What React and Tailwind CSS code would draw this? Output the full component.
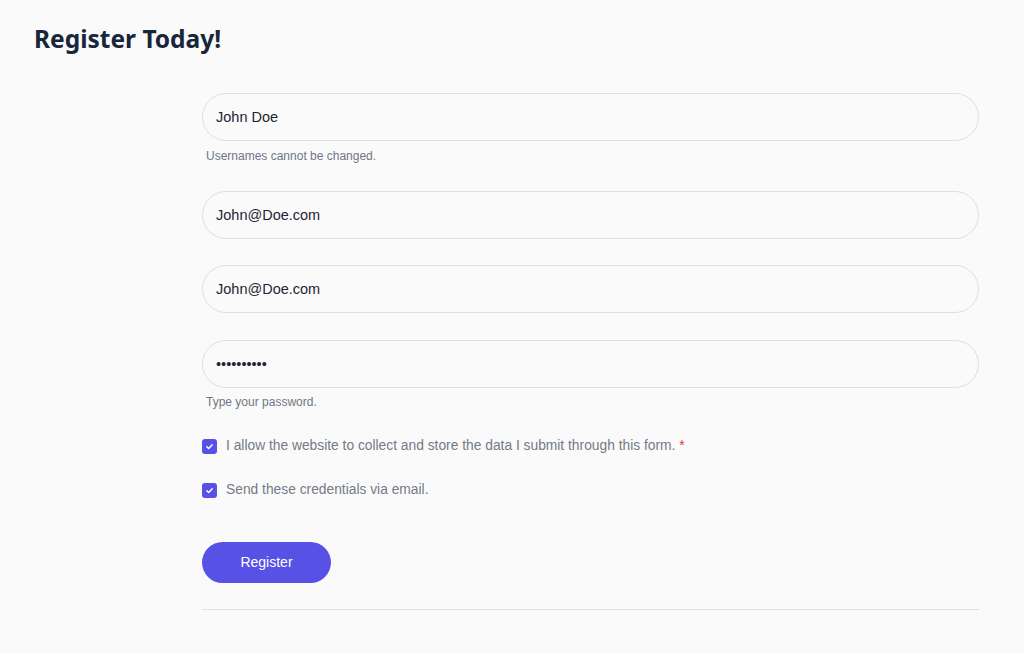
import React from "react";

function Field({ type = "text", value, mt }) {
  return (
    <input
      type={type}
      defaultValue={value}
      className={`block w-full h-[48px] rounded-full border border-[#dcdfe8] bg-[#fafafb] px-[13px] text-[14.5px] text-[#1f2633] outline-none ${mt}`}
      style={{ fontFamily: '"Liberation Sans", Arial, sans-serif' }}
    />
  );
}

function Check({ children, mt }) {
  return (
    <label className={`flex items-center h-[20px] ${mt}`}>
      <span className="flex items-center justify-center w-[15px] h-[15px] rounded-[3px] bg-[#5751e6]">
        <svg width="9" height="9" viewBox="0 0 10 10" fill="none">
          <path d="M2 5.2 L4.1 7.2 L8 3" stroke="white" strokeWidth="1.6" strokeLinecap="round" strokeLinejoin="round" />
        </svg>
      </span>
      <span className="ml-[9px] text-[13.8px] text-[#747a86]">{children}</span>
    </label>
  );
}

export default function App() {
  return (
    <div
      className="min-h-[653px] w-full bg-[#fafafb] px-[34px] pt-[21px]"
      style={{ fontFamily: '"Liberation Sans", Arial, sans-serif' }}
    >
      <h1
        className="text-[24.5px] leading-[36px] font-bold text-[#17263a]"
        style={{ fontFamily: '"Noto Sans", sans-serif' }}
      >
        Register Today!
      </h1>
      <form className="ml-[168px] w-[777px] mt-[36px]">
        <Field value="John Doe" />
        <p className="mt-[7px] ml-[4px] text-[12px] leading-[16px] text-[#707784]">Usernames cannot be changed.</p>
        <Field value="John@Doe.com" mt="mt-[27px]" />
        <Field value="John@Doe.com" mt="mt-[26px]" />
        <Field type="password" value="abcdefghij" mt="mt-[27px]" />
        <p className="mt-[6px] ml-[4px] text-[12px] leading-[16px] text-[#707784]">Type your password.</p>
        <Check mt="mt-[26px]">
          I allow the website to collect and store the data I submit through this form.{" "}
          <span className="text-[#d23b3b]">*</span>
        </Check>
        <Check mt="mt-[24px]">Send these credentials via email.</Check>
        <button
          type="button"
          className="mt-[42px] block w-[129px] h-[41px] rounded-full bg-[#5751e6] text-white text-[14px]"
        >
          Register
        </button>
        <div className="mt-[26px] h-px bg-[#dcdfe8]" />
      </form>
    </div>
  );
}
